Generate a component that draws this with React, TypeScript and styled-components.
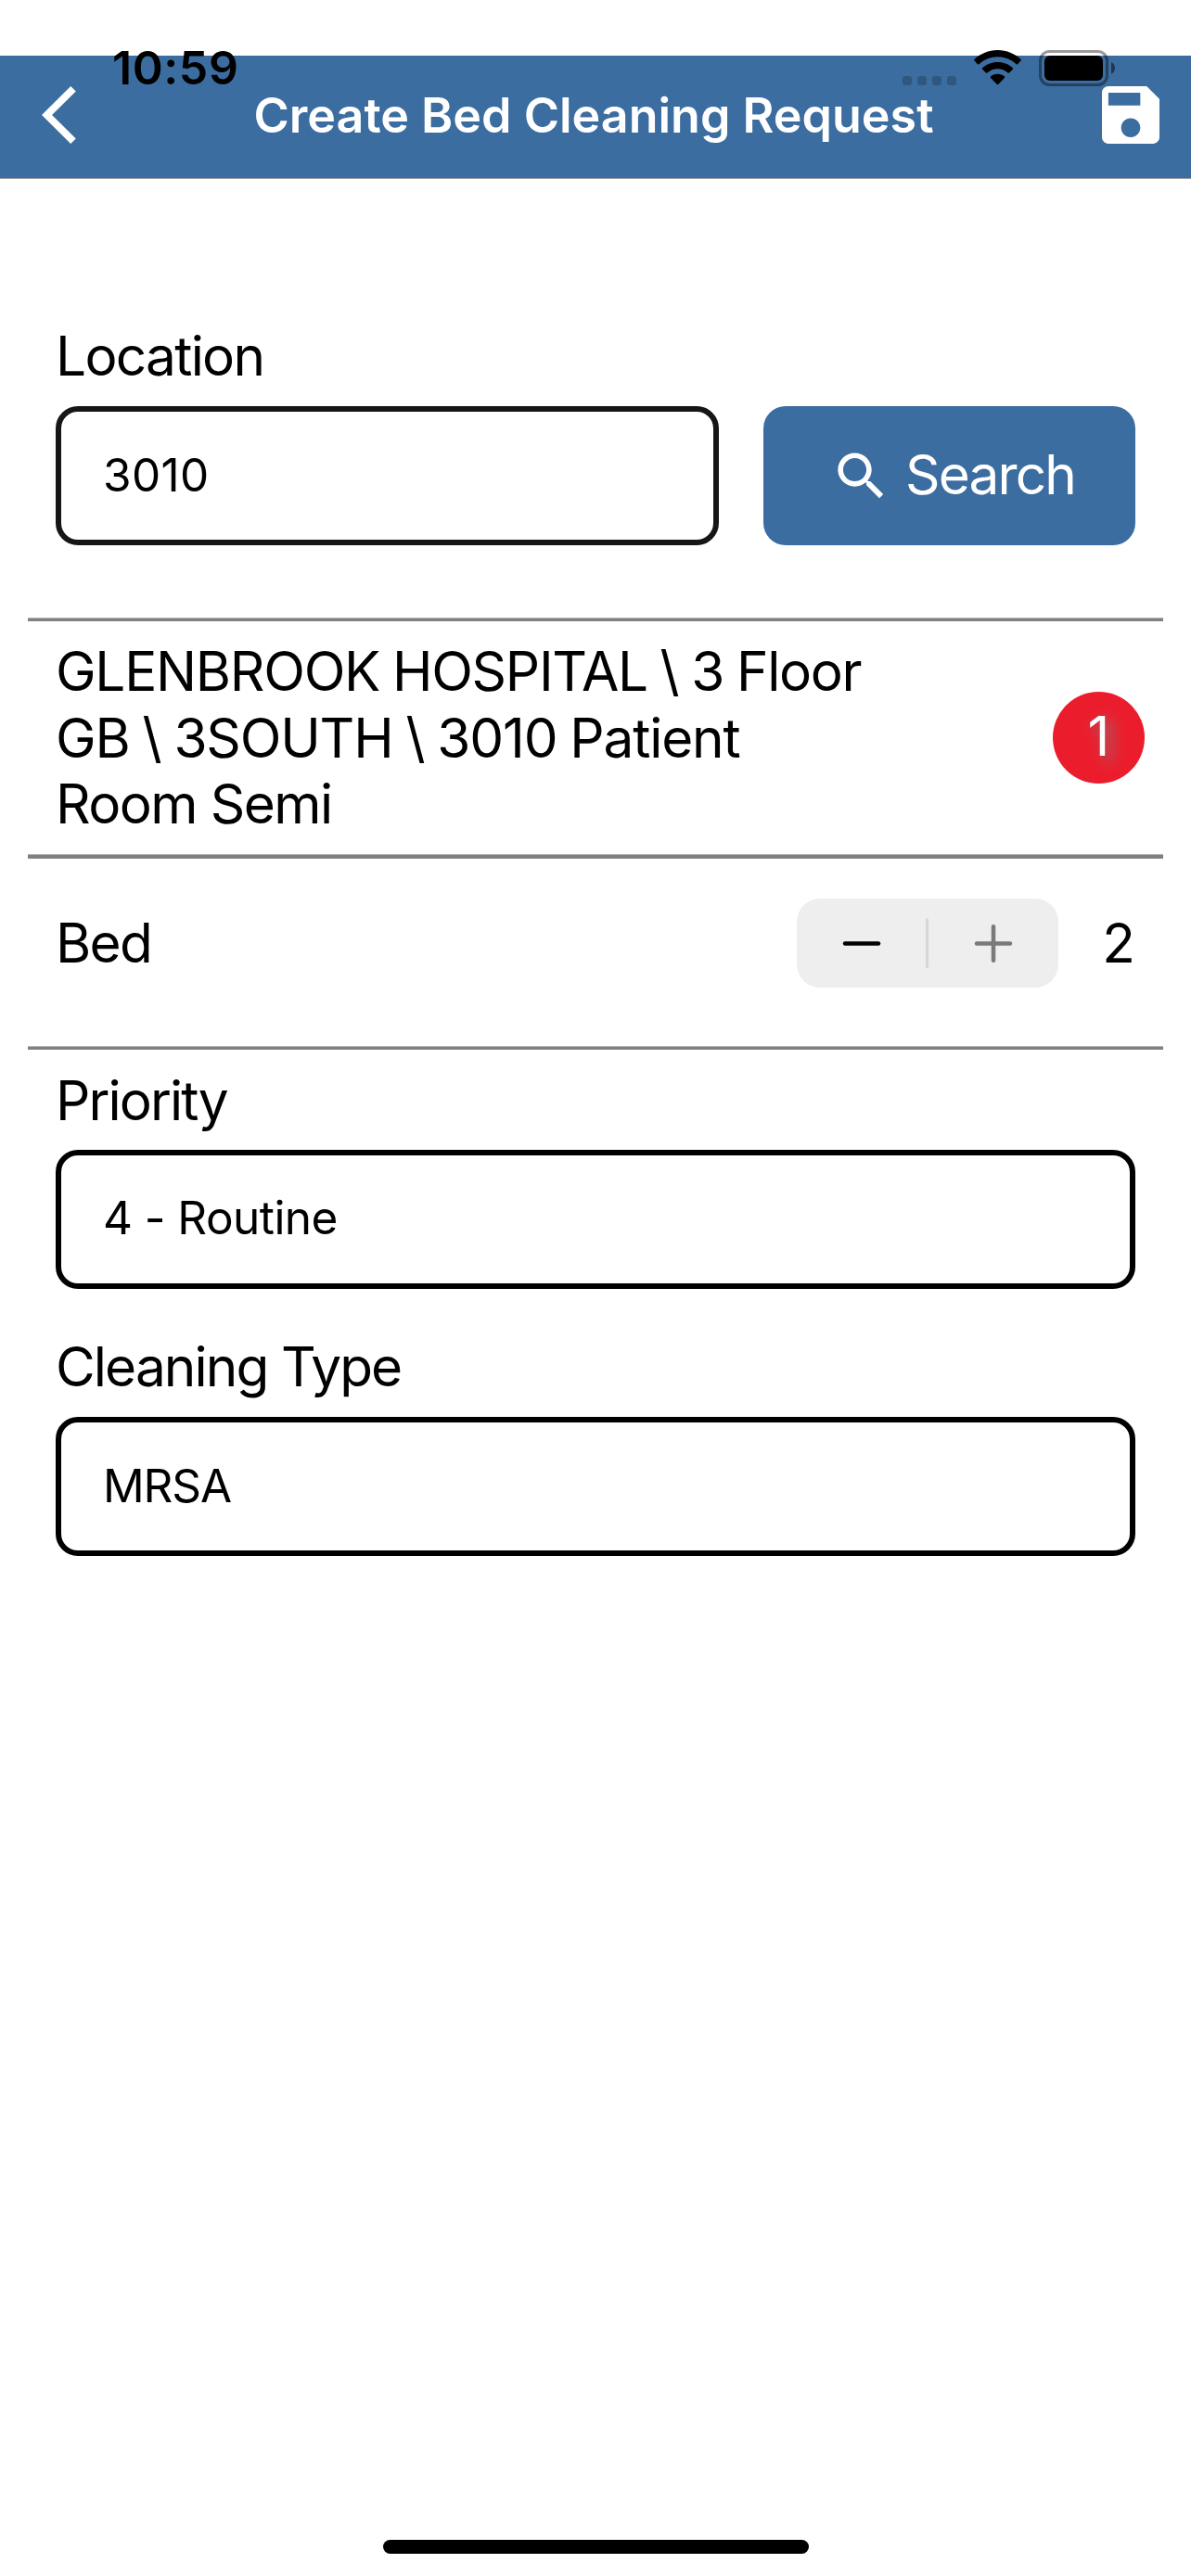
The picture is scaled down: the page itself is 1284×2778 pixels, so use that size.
import React from 'react';
import styled, { createGlobalStyle } from 'styled-components';

const GlobalStyle = createGlobalStyle`
  * { box-sizing: border-box; }
  body {
    margin: 0;
    background: #fff;
    color: #000;
    font-family: Inter, "Liberation Sans", sans-serif;
  }
`;

const BLUE = '#3c6da0';

const Screen = styled.div`
  position: relative;
  display: flex;
  flex-direction: column;
  width: 1284px;
  height: 2778px;
  padding-top: 60px;
  overflow: hidden;
  background: #fff;
`;

/* The system status bar floats over the navigation bar. */
const StatusBar = styled.div`
  position: absolute;
  top: 43px;
  left: 0;
  right: 0;
  height: 60px;
  display: flex;
  align-items: center;
  justify-content: space-between;
  padding: 0 81px 0 121px;
`;

const Clock = styled.time`
  font-size: 50px;
  font-weight: 600;
  line-height: 60px;
  letter-spacing: 0.6px;
`;

const StatusIcons = styled.div`
  display: flex;
  align-items: flex-end;
  height: 39px;
`;

const SignalDots = styled.div`
  display: flex;
  gap: 6px;
  margin: 0 19px 1px 0;
`;

const Dot = styled.i`
  width: 10px;
  height: 10px;
  border-radius: 3px;
  background: rgba(0, 0, 0, 0.2);
`;

const WifiIcon = styled.svg`
  width: 51px;
  height: 38px;
  margin: 0 19px 0.5px 0;
`;

const BatteryIcon = styled.svg`
  width: 83px;
  height: 39px;
`;

const NavBar = styled.header`
  display: flex;
  align-items: center;
  height: 133px;
  padding: 0 34px 0 45px;
  background: ${BLUE};
  border-bottom: 1px solid #9a9ea3;
  color: #fff;
`;

const Title = styled.h1`
  flex: 1;
  margin: 0;
  padding: 0 0 2px 10px;
  font-size: 52px;
  font-weight: 600;
  line-height: 66px;
  text-align: center;
  white-space: nowrap;
`;

const NavButton = styled.button<{ $width: number }>`
  display: block;
  width: ${(p) => p.$width}px;
  height: 62px;
  margin: 0 0 4px;
  padding: 0;
  border: 0;
  background: none;
  color: inherit;

  svg {
    display: block;
    width: 100%;
    height: 100%;
  }
`;

const Form = styled.main`
  display: flex;
  flex-direction: column;
  padding: 155px 30px 0;
`;

const Field = styled.section<{ $top?: number; $gap?: number }>`
  display: flex;
  flex-direction: column;
  gap: ${(p) => p.$gap ?? 19}px;
  margin-top: ${(p) => p.$top ?? 0}px;
  padding: 0 30px;
`;

const Label = styled.div<{ $tracking: number }>`
  font-size: 58.5px;
  line-height: 71px;
  letter-spacing: ${(p) => p.$tracking}px;
  white-space: nowrap;
`;

const SearchRow = styled.div`
  display: flex;
  justify-content: space-between;
`;

const ValueBox = styled.div<{ $width?: string; $border?: string; $tracking: number; $lift?: number }>`
  display: flex;
  align-items: center;
  width: ${(p) => p.$width ?? '100%'};
  height: 150px;
  padding: 0 45px ${(p) => p.$lift ?? 2}px;
  border: 6px solid ${(p) => p.$border ?? '#000'};
  border-radius: 24px;
  font-size: 49.5px;
  line-height: 60px;
  letter-spacing: ${(p) => p.$tracking}px;
`;

const SearchButton = styled.button`
  display: flex;
  align-items: center;
  width: 401px;
  height: 150px;
  padding: 0 0 0 72px;
  border: 0;
  border-radius: 24px;
  background: ${BLUE};
  color: #fff;
  font-family: inherit;
  font-size: 58.5px;
  line-height: 71px;
  letter-spacing: -1.85px;

  svg {
    width: 67px;
    height: 67px;
    margin-right: 14px;
  }
`;

const ButtonText = styled.span`
  padding-bottom: 3px;
`;

const Divider = styled.hr<{ $top?: number; $size?: number }>`
  width: 100%;
  height: ${(p) => p.$size ?? 4}px;
  margin: ${(p) => p.$top ?? 0}px 0 0;
  border: 0;
  border-top: 1px solid #b4b4b4;
  background: #808080;
`;

const LocationRow = styled.section`
  display: flex;
  justify-content: space-between;
  align-items: center;
  height: 251px;
  padding: 0 20px 0 30px;
`;

const LocationPath = styled.div`
  font-size: 58.5px;
  line-height: 71.6px;
  white-space: nowrap;
`;

const PathLine = styled.div<{ $tracking: number; $wordGap?: number }>`
  letter-spacing: ${(p) => p.$tracking}px;
  word-spacing: ${(p) => p.$wordGap ?? 0}px;
`;

const Badge = styled.div`
  display: flex;
  align-items: center;
  justify-content: center;
  width: 99px;
  height: 99px;
  padding-bottom: 3px;
  margin-bottom: 1px;
  border-radius: 50%;
  background: #eb1d2d;
  color: #fff;
  font-size: 58.5px;
  line-height: 71px;
  text-shadow: 6px 6px 15px #808080;
`;

const BedRow = styled.section`
  display: flex;
  align-items: center;
  height: 202px;
  padding: 43px 30px 63px;

  ${Label} {
    padding-bottom: 1px;
  }
`;

const Stepper = styled.div`
  display: flex;
  align-items: center;
  width: 282px;
  height: 96px;
  margin: 0 47.500px 0 auto;
  border-radius: 25px;
  background: #eeeeee;
`;

const StepButton = styled.button<{ $disabled?: boolean }>`
  display: flex;
  flex: 1;
  align-items: center;
  justify-content: center;
  height: 96px;
  padding: 0;
  border: 0;
  background: none;
  color: ${(p) => (p.$disabled ? '#7a7a7a' : '#000')};

  svg {
    width: 42px;
    height: 42px;
  }
`;

const StepDivider = styled.span`
  width: 3px;
  height: 54px;
  border-radius: 2px;
  background: #d6d6d8;
`;

const HomeIndicator = styled.div`
  width: 459px;
  height: 15px;
  margin: auto auto 24px;
  border-radius: 8px;
  background: #000;
`;

export default function App() {
  return (
    <>
      <GlobalStyle />
      <Screen>
        <NavBar>
          <NavButton $width={37} aria-label="Back">
            <svg viewBox="0 0 37 62" fill="currentColor">
              <path d="M31.2 0 36.8 5.6 11 31 36.8 56.4 31.2 62 0 31Z" />
            </svg>
          </NavButton>
          <Title>Create Bed Cleaning Request</Title>
          <NavButton $width={62} aria-label="Save">
            <svg viewBox="3 3 18 18" fill="currentColor">
              <path d="M17 3H5c-1.11 0-2 .9-2 2v14c0 1.1.89 2 2 2h14c1.1 0 2-.9 2-2V7l-4-4zm-5 16c-1.66 0-3-1.34-3-3s1.34-3 3-3 3 1.34 3 3-1.34 3-3 3zm3-10H5V5h10v4z" />
            </svg>
          </NavButton>
        </NavBar>

        <StatusBar>
          <Clock>10:59</Clock>
          <StatusIcons>
            <SignalDots>
              <Dot />
              <Dot />
              <Dot />
              <Dot />
            </SignalDots>
            <WifiIcon viewBox="0 0 51 38">
              <path d="M25.5 0C35.2 0 44 3.8 50.6 10.1Q51.2 10.8 50.5 11.5L47 15.2Q46.3 15.8 45.6 15.2A29.3 29.3 0 0 0 5.4 15.2Q4.7 15.8 4 15.2L.5 11.5Q-.2 10.8 .4 10.1C7 3.8 15.8 0 25.5 0Z" />
              <path d="M25.5 13C31.9 13 37.7 15.4 41.9 19.3Q42.6 20 41.9 20.7L38 24.5Q37.3 25.2 36.6 24.5A16.3 16.3 0 0 0 14.4 24.5Q13.7 25.2 13 24.5L9.1 20.7Q8.4 20 9.1 19.3C13.3 15.4 19.1 13 25.5 13Z" />
              <path d="M25.5 25.8C28.4 25.8 31 26.8 33 28.5Q33.7 29.2 33 29.9L26.2 36.9Q25.5 37.6 24.8 36.9L18 29.9Q17.3 29.2 18 28.5C20 26.8 22.6 25.8 25.5 25.8Z" />
            </WifiIcon>
            <BatteryIcon viewBox="0 0 83 39">
              <rect x="1.5" y="1.5" width="72" height="36" rx="10" fill="none" stroke="#000" strokeOpacity="0.4" strokeWidth="3" />
              <rect x="6" y="6" width="63" height="27" rx="6" />
              <path d="M78 13.3C83.3 15.5 83.3 23.5 78 25.7Z" fillOpacity="0.5" />
            </BatteryIcon>
          </StatusIcons>
        </StatusBar>

        <Form>
          <Field>
            <Label $tracking={-1.7}>Location</Label>
            <SearchRow>
              <ValueBox $width="715px" $border="#161616" $tracking={0.35}>3010</ValueBox>
              <SearchButton>
                <svg viewBox="0 0 24 24" fill="currentColor">
                  <path d="M15.5 14h-.79l-.28-.27C15.41 12.59 16 11.11 16 9.5 16 5.91 13.09 3 9.5 3S3 5.91 3 9.5 5.91 16 9.5 16c1.61 0 3.09-.59 4.23-1.57l.27.28v.79l5 4.99L20.49 19l-4.99-5zm-6 0C7.01 14 5 11.99 5 9.5S7.01 5 9.5 5 14 7.01 14 9.5 11.99 14 9.5 14z" />
                </svg>
                <ButtonText>Search</ButtonText>
              </SearchButton>
            </SearchRow>
          </Field>

          <Divider $top={78} />
          <LocationRow>
            <LocationPath>
              <PathLine $tracking={-1.28} $wordGap={-1.35}>GLENBROOK HOSPITAL \ 3 Floor</PathLine>
              <PathLine $tracking={-1.18} $wordGap={-1.3}>GB \ 3SOUTH \ 3010 Patient</PathLine>
              <PathLine $tracking={-1.57}>Room Semi</PathLine>
            </LocationPath>
            <Badge>1</Badge>
          </LocationRow>
          <Divider $size={5} />

          <BedRow>
            <Label $tracking={-1.69}>Bed</Label>
            <Stepper>
              <StepButton aria-label="Decrease">
                <svg viewBox="0 0 42 42" stroke="currentColor" strokeWidth="4.5" strokeLinecap="round">
                  <path d="M3 21.5H39" />
                </svg>
              </StepButton>
              <StepDivider />
              <StepButton $disabled aria-label="Increase">
                <svg viewBox="0 0 42 42" stroke="currentColor" strokeWidth="4.5" strokeLinecap="round">
                  <path d="M3 21.5H39M21 3.3V39.7" />
                </svg>
              </StepButton>
            </Stepper>
            <Label $tracking={0}>2</Label>
          </BedRow>
          <Divider />

          <Field $top={19} $gap={18}>
            <Label $tracking={-1.9}>Priority</Label>
            <ValueBox $tracking={-0.56} $lift={4}>4 - Routine</ValueBox>
          </Field>
          <Field $top={48}>
            <Label $tracking={-1.9}>Cleaning Type</Label>
            <ValueBox $tracking={-1.11}>MRSA</ValueBox>
          </Field>
        </Form>

        <HomeIndicator />
      </Screen>
    </>
  );
}
